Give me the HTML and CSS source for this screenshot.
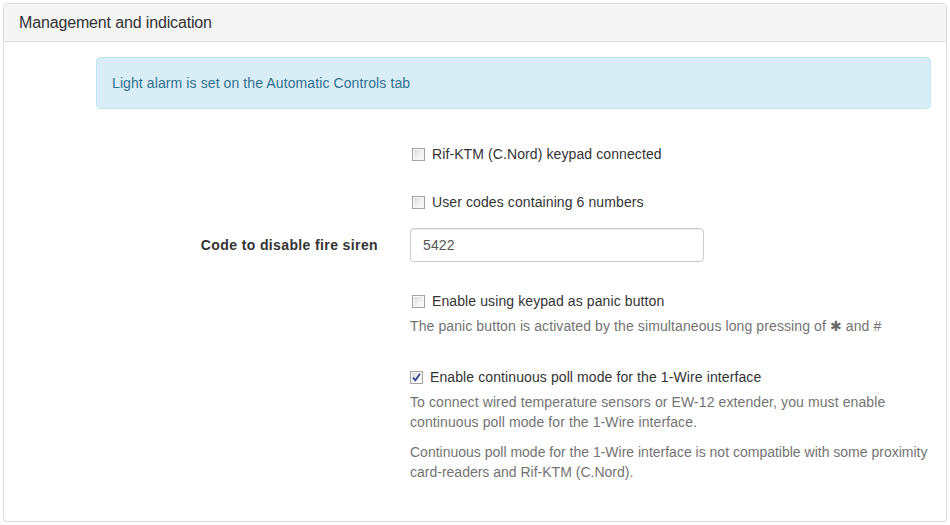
FILE: index.html
```html
<!DOCTYPE html>
<html>
<head>
<meta charset="utf-8">
<link rel="stylesheet" href="styles.css">
</head>
<body>
<div class="panel">
  <div class="panel-heading">Management and indication</div>
  <div class="panel-body">
    <div class="alert">Light alarm is set on the Automatic Controls tab</div>

    <div class="row r1">
      <div class="label-col"></div>
      <div class="control-col">
        <label class="checkbox"><span class="box"></span>Rif-KTM (C.Nord) keypad connected</label>
      </div>
    </div>

    <div class="row r2">
      <div class="label-col"></div>
      <div class="control-col">
        <label class="checkbox"><span class="box"></span>User codes containing 6 numbers</label>
      </div>
    </div>

    <div class="row r3">
      <div class="label-col"><span class="control-label">Code to disable fire siren</span></div>
      <div class="control-col">
        <div class="input">5422</div>
      </div>
    </div>

    <div class="row r4">
      <div class="label-col"></div>
      <div class="control-col">
        <label class="checkbox"><span class="box"></span>Enable using keypad as panic button</label>
        <p class="help">The panic button is activated by the simultaneous long pressing of <span class="ast">✱</span> and #</p>
      </div>
    </div>

    <div class="row r5">
      <div class="label-col"></div>
      <div class="control-col">
        <label class="checkbox"><span class="box checked"><svg width="11" height="11" viewBox="0 0 11 11"><path d="M2 5.5 L4.3 8.3 L9 1.8" fill="none" stroke="#2a3f94" stroke-width="1.7"/></svg></span>Enable continuous poll mode for the 1-Wire interface</label>
        <p class="help">To connect wired temperature sensors or EW-12 extender, you must enable continuous poll mode for the 1-Wire interface.</p>
        <p class="help last">Continuous poll mode for the 1-Wire interface is not compatible with some proximity card-readers and Rif-KTM (C.Nord).</p>
      </div>
    </div>
  </div>
</div>
</body>
</html>
```

FILE: styles.css
```css
html, body {
  margin: 0;
  padding: 0;
  background: #fff;
}
body {
  margin: 3px;
  font-family: "Liberation Sans", Arial, sans-serif;
  font-size: 14px;
  line-height: 20px;
  letter-spacing: 0.1px;
  color: #333;
}
.panel {
  border: 1px solid #dddddd;
  border-radius: 4px;
  box-shadow: 0 1px 1px rgba(0,0,0,0.05);
  background: #fff;
}
.panel-heading {
  background: #f5f5f5;
  border-bottom: 1px solid #dddddd;
  border-radius: 3px 3px 0 0;
  padding: 10px 15px;
  font-size: 16px;
  line-height: 17px;
  letter-spacing: -0.15px;
  color: #333;
}
.panel-body {
  padding: 15px 15px 39px 15px;
}
.alert {
  margin-left: 77px;
  padding: 15px;
  background: #d9edf7;
  border: 1px solid #bce8f1;
  border-radius: 4px;
  color: #31708f;
}
.row {
  display: flex;
}
.label-col {
  width: 361px;
  flex: 0 0 361px;
  margin-right: 30px;
  text-align: right;
}
.control-col {
  flex: 1;
}
.r1 { margin-top: 35px; }
.r2 { margin-top: 28px; }
.r3 { margin-top: 16px; }
.r4 { margin-top: 29px; }
.r5 { margin-top: 31px; }
.control-label {
  display: block;
  padding-top: 7px;
  padding-right: 2px;
  font-weight: bold;
  letter-spacing: 0.38px;
  color: #333;
}
.input {
  width: 268px;
  height: 20px;
  padding: 6px 12px;
  border: 1px solid #cccccc;
  border-radius: 4px;
  box-shadow: inset 0 1px 1px rgba(0,0,0,0.075);
  color: #555;
}
.checkbox {
  display: flex;
  align-items: center;
  height: 20px;
  color: #333;
}
.box {
  width: 11px;
  height: 11px;
  margin-left: 2px;
  margin-right: 7px;
  border: 1px solid #a3a3a3;
  background: linear-gradient(135deg, #d9d9d9 0%, #f3f3f3 60%, #ffffff 100%);
  box-shadow: inset 0 0 0 1px #f7f7f7;
  display: flex;
  align-items: center;
  justify-content: center;
}
.box.checked {
  margin-left: 0;
}
.box svg {
  display: block;
}
.help {
  margin: 5px 0 0 0;
  color: #737373;
}
.help.last {
  margin-top: 10px;
  letter-spacing: 0;
}
.ast {
  font-family: "DejaVu Sans", sans-serif;
  font-size: 14px;
  color: #6a6a6a;
}
```
